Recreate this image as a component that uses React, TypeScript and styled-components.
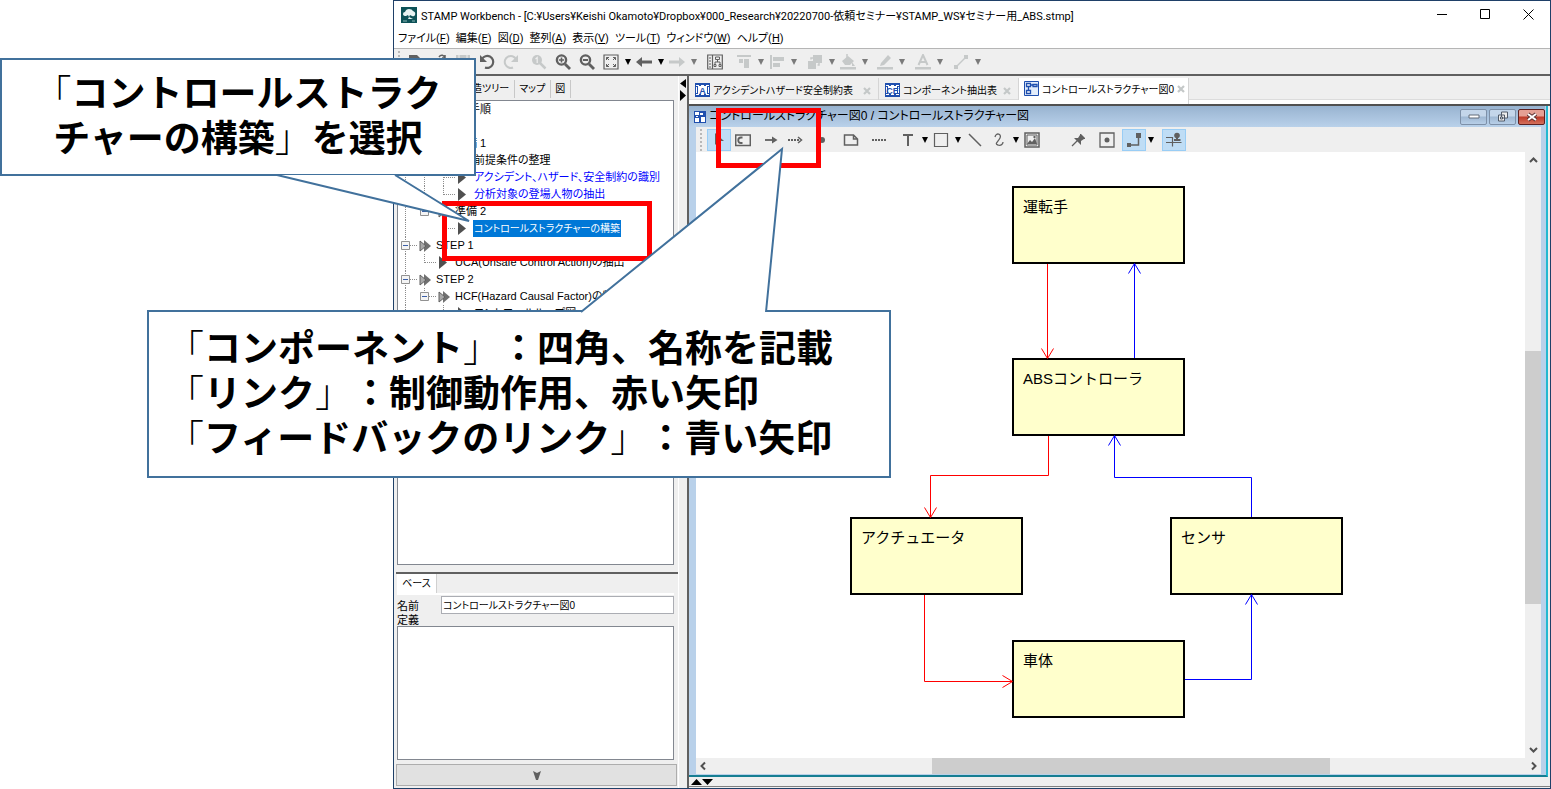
import React from "react";
import styled, { createGlobalStyle, css } from "styled-components";

const ui = `"Liberation Sans", "Noto Sans CJK JP", sans-serif`;

const GlobalStyle = createGlobalStyle`
  * { box-sizing: border-box; }
  body { margin: 0; background: #fff; color: #000; font-family: ${ui}; font-size: 11px; }
  button, input, textarea { font: inherit; color: inherit; }
  button { margin: 0; padding: 0; border: 0; background: none; }
  svg { display: block; flex: none; }
`;

/* ---------- page and window ---------- */

const Page = styled.main`
  position: relative;
  display: flex;
  min-height: 100vh;
  padding-left: 393px;
  overflow: hidden;
`;

const Window = styled.section`
  display: flex;
  flex: 1;
  flex-direction: column;
  min-width: 0;
  border: 1px solid #1f4068;
  background: #fff;
`;

const TitleBar = styled.header`
  display: flex;
  align-items: center;
  height: 27px;
  padding-left: 7px;
`;

const WindowTitle = styled.h1`
  flex: 1;
  margin: 0 0 0 4px;
  font: 400 11px Roboto, "Noto Sans CJK JP", sans-serif;
  font-feature-settings: "palt";
  white-space: nowrap;
`;

const CaptionButton = styled.button`
  display: flex;
  align-items: center;
  justify-content: center;
  width: 43px;
  height: 28px;
`;

const MenuBar = styled.nav`
  display: flex;
  align-items: flex-end;
  gap: 6px;
  height: 20px;
  padding-left: 4px;
`;

const MenuItem = styled.button`
  height: 18px;
  font-family: Roboto, "Noto Sans CJK JP", sans-serif;
  font-size: 11px;
  font-feature-settings: "palt";
  line-height: 18px;
  white-space: nowrap;
`;

/* ---------- toolbars ---------- */

const Toolbar = styled.div<{ $tall?: boolean }>`
  display: flex;
  flex: none;
  align-items: center;
  height: ${(p) => (p.$tall ? 28 : 25)}px;
  background: #efefef;
  ${(p) => p.$tall && css`border-top: 1px solid #b5b5b5; border-bottom: 2px solid #606060;`}
`;

const Grip = styled.span<{ $w: number }>`
  flex: none;
  width: ${(p) => p.$w}px;
  height: 22px;
  background: repeating-linear-gradient(#b8b8b8 0 2px, transparent 2px 4px) 4px 0 / 2px 100% no-repeat;
`;

const Tool = styled.button<{ $on?: boolean; $off?: boolean; $gap?: number }>`
  display: flex;
  flex: none;
  align-items: center;
  justify-content: center;
  width: 24px;
  height: 22px;
  margin-left: ${(p) => p.$gap ?? 0}px;
  color: ${(p) => (p.$off ? "#c6c9c9" : "#606060")};
  ${(p) => p.$on && css`background: #bfddf5; border: 1px solid #99cdf5;`}
`;

const CaretButton = styled.button<{ $off?: boolean }>`
  display: flex;
  flex: none;
  align-items: center;
  justify-content: center;
  width: 9px;
  height: 22px;
  color: ${(p) => (p.$off ? "#7a7a7a" : "#000")};
`;

/* ---------- panes ---------- */

const Body = styled.div`
  display: flex;
  flex: 1;
  min-height: 0;
  background: #efefef;
`;

const SidePane = styled.aside`
  display: flex;
  flex: none;
  flex-direction: column;
  width: 285px;
  padding-left: 2px;
  border-right: 1px solid #fff;
`;

const Splitter = styled.div`
  display: flex;
  flex: none;
  flex-direction: column;
  align-items: center;
  gap: 2px;
  width: 8px;
  padding-top: 3px;
`;

const SideTabs = styled.div`
  display: flex;
  flex: none;
  align-items: stretch;
  height: 24px;
  padding: 4px 0 2px 62px;
`;

const SideTab = styled.button`
  padding: 0 5px 0 4px;
  border-right: 1px solid #c8c8c8;
  font-size: 10px;
  font-feature-settings: "palt";
  line-height: 18px;
  white-space: nowrap;
`;

const Tree = styled.ul`
  flex: 1;
  margin: 0 4px 7px 1px;
  padding: 0;
  border: 1px solid #828790;
  background: #fff;
  list-style: none;
`;

const TreeRow = styled.li<{ $indent?: number }>`
  display: flex;
  height: 17px;
  align-items: center;
  padding-left: ${(p) => p.$indent ?? 0}px;
  white-space: nowrap;
`;

const Guide = styled.span<{ $line?: boolean; $last?: boolean; $own?: boolean }>`
  display: flex;
  flex: none;
  align-items: center;
  width: 19px;
  height: 17px;
  padding-left: 3px;
  background-repeat: no-repeat;
  background-image: ${(p) => (p.$line ? "repeating-linear-gradient(#8c8c8c 0 1px, transparent 1px 2px)" : "none")},
    ${(p) => (p.$own ? "repeating-linear-gradient(90deg, #8c8c8c 0 1px, transparent 1px 2px)" : "none")};
  background-position: 7px 0, 8px 8px;
  background-size: 1px ${(p) => (p.$last ? "9px" : "17px")}, 11px 1px;
`;

const NodeIcon = styled.span`
  display: flex;
  flex: none;
  width: 16px;
  margin-left: 2px;
`;

const NodeLabel = styled.span<{ $tone?: "link" | "selected" }>`
  height: 17px;
  padding: 0 1px;
  font-feature-settings: "palt";
  font-size: ${(p) => (p.$tone === "selected" ? 10 : 11)}px;
  line-height: 17px;
  color: ${(p) => (p.$tone === "link" ? "#0000ff" : p.$tone === "selected" ? "#fff" : "#000")};
  background: ${(p) => (p.$tone === "selected" ? "#0078d7" : "transparent")};
`;

const Properties = styled.form`
  display: flex;
  flex: none;
  flex-direction: column;
  height: 191px;
  padding: 0 4px 0 1px;
  border-top: 2px solid #606060;
`;

const PropertyTab = styled.button`
  align-self: flex-start;
  width: 40px;
  height: 19px;
  border-right: 1px solid #d0d0d0;
  background: #fff;
  font-size: 10px;
  font-feature-settings: "palt";
  line-height: 18px;
`;

const Field = styled.div`
  display: flex;
  align-items: center;
  height: 21px;
  border-top: 2px solid #fff;
  label { flex: none; width: 44px; }
  input {
    flex: 1;
    min-width: 0;
    height: 18px;
    padding: 0 1px;
    border: 1px solid #abadb3;
    background: #fff;
    font-size: 10px;
    font-feature-settings: "palt";
  }
`;

const DefinitionLabel = styled.label`
  height: 12px;
  line-height: 12px;
`;

const Definition = styled.textarea`
  flex: 1;
  border: 1px solid #828790;
  background: #fff;
  resize: none;
  margin-bottom: 3px;
`;

const CollapseButton = styled.button`
  display: flex;
  flex: none;
  align-items: center;
  justify-content: center;
  height: 22px;
  margin: 1px 1px 2px 0;
  border: 1px solid #adadad;
  background: #e1e1e1;
  color: #606060;
`;

/* ---------- documents ---------- */

const Documents = styled.section`
  display: flex;
  flex: 1;
  flex-direction: column;
  min-width: 0;
  border-left: 2px solid #606060;
`;

const DocTabs = styled.div`
  display: flex;
  flex: none;
  align-items: flex-end;
  height: 30px;
  border-bottom: 2px solid #505050;
  background: linear-gradient(#efefef 0 23px, #dcdcdc 23px 24px, #fff 24px);
`;

const DocTab = styled.button<{ $w: number; $active?: boolean }>`
  display: flex;
  flex: none;
  align-items: center;
  gap: 3px;
  width: ${(p) => p.$w}px;
  height: ${(p) => (p.$active ? 26 : 22)}px;
  margin-bottom: ${(p) => (p.$active ? 0 : 4)}px;
  padding: ${(p) => (p.$active ? "0 0 6px 5px" : "1px 0 0 6px")};
  border-right: 1px solid #d5d5d5;
  background: ${(p) => (p.$active ? "#fff" : "transparent")};
  font-size: 10px;
  font-feature-settings: "palt";
  white-space: nowrap;
`;

const TabClose = styled.span`
  flex: none;
  margin: 2px 7px 0 auto;
`;

const Frame = styled.div`
  display: flex;
  flex: 1;
  flex-direction: column;
  min-height: 0;
  padding: 0 5px 1px 7px;
  border-right: 2px solid #24b8d0;
  border-bottom: 2px solid #167e92;
  margin-right: 2px;
  background: #b9d1ea;
`;

const FrameTitle = styled.div`
  display: flex;
  flex: none;
  align-items: center;
  height: 21px;
  margin: 0 -4px 0 -7px;
  padding-left: 5px;
  background: linear-gradient(#98b3d0, #b9d1ea);
`;

const FrameName = styled.h2`
  flex: 1;
  margin: 0 0 0 3px;
  font-size: 12px;
  font-weight: 400;
  font-feature-settings: "palt";
  line-height: 21px;
  white-space: nowrap;
`;

const FrameButton = styled.button<{ $close?: boolean }>`
  display: flex;
  align-items: center;
  justify-content: center;
  width: 27px;
  height: 16px;
  margin-left: 2px;
  border: 1px solid ${(p) => (p.$close ? "#5c2020" : "#7d90a8")};
  border-radius: 2px;
  background: ${(p) =>
    p.$close
      ? "linear-gradient(#e4a094 0 6px, #bd3a28 7px, #d4705c)"
      : "linear-gradient(#c4d6ea 0 6px, #9fb8d3 7px, #b8cfe8)"};
`;

const Viewport = styled.div`
  display: grid;
  flex: 1;
  grid-template-columns: 1fr 16px;
  grid-template-rows: 1fr 16px;
  min-height: 0;
  background: #efefef;
`;

const Canvas = styled.div`
  position: relative;
  overflow: hidden;
  background: #fff;
`;

const Edges = styled.svg`
  position: absolute;
  inset: 0;
  width: 100%;
  height: 100%;
`;

const Component = styled.div<{ $x: number; $y: number }>`
  position: absolute;
  left: ${(p) => p.$x}px;
  top: ${(p) => p.$y}px;
  width: 173px;
  height: 78px;
  padding: 9px;
  border: 2px solid #000;
  background: #ffffcc;
  font-size: 15px;
  line-height: 20px;
`;

const VScroll = styled.div`
  display: flex;
  flex-direction: column;
  align-items: center;
  color: #505050;
  i { flex: 252; width: 100%; background: #cdcdcd; order: 2; }
  &::before { content: ""; flex: 183; order: 1; }
  &::after { content: ""; flex: 138; order: 3; }
  svg:first-of-type { order: 0; }
  svg:last-of-type { order: 4; }
`;

const HScroll = styled.div`
  display: flex;
  grid-column: 1 / 3;
  align-items: center;
  color: #505050;
  i { flex: 398; height: 100%; background: #cdcdcd; order: 2; }
  &::before { content: ""; flex: 221; order: 1; }
  &::after { content: ""; flex: 196; order: 3; }
  svg:first-of-type { order: 0; }
  svg:last-of-type { order: 4; }
`;

const BottomStrip = styled.div`
  flex: none;
  height: 10px;
  margin-bottom: 1px;
  padding: 2px 0 0 2px;
  border-bottom: 1px solid #808080;
`;

/* ---------- annotations ---------- */

const Highlight = styled.div<{ $x: number; $y: number; $w: number }>`
  position: absolute;
  left: ${(p) => p.$x}px;
  top: ${(p) => p.$y}px;
  width: ${(p) => p.$w}px;
  height: 60px;
  border: 5px solid #ff0000;
`;

const Callout = styled.div<{ $x: number; $y: number; $w: number; $h: number; $center?: boolean }>`
  position: absolute;
  left: ${(p) => p.$x}px;
  top: ${(p) => p.$y}px;
  width: ${(p) => p.$w}px;
  height: ${(p) => p.$h}px;
  padding: ${(p) => (p.$center ? "12px 0" : "15px 18px")};
  border: 2px solid #41719c;
  background: #fff;
  font: 700 37px/45px ${ui};
  text-align: ${(p) => (p.$center ? "center" : "left")};
  text-spacing-trim: space-all;
  white-space: nowrap;
  p { margin: 0; }
  span { font-weight: 300; }
`;

const Tail = styled.svg`
  position: absolute;
  left: 0;
  top: 0;
  overflow: visible;
  pointer-events: none;
`;

/* ---------- icons ---------- */

const Icon = ({ children, size = 16 }: { children: React.ReactNode; size?: number }) => (
  <svg width={size} height={size} viewBox="0 0 16 16" fill="none" stroke="currentColor" strokeWidth="1.5">
    {children}
  </svg>
);

const solid = { fill: "currentColor", stroke: "none" };

const Caret = ({ off }: { off?: boolean }) => (
  <CaretButton $off={off} aria-label="More">
    <svg width="6" height="6" viewBox="0 0 6 6"><path d="M0 0h6L3 6z" fill="currentColor" /></svg>
  </CaretButton>
);

const icons: Record<string, React.ReactNode> = {
  new: <path d="M2 1h8l4 4v10H2z" {...solid} />,
  open: <><path d="M0 5h5l2 2h7v8H0z" {...solid} /><path d="M8 3c2-3 5-2 6 1M11 4h3V1" /></>,
  save: <><path d="M1 1h14v14H1z" {...solid} /><path d="M4 1v5h8V1M4 15v-5h8v5" stroke="#efefef" strokeWidth="1" /></>,
  undo: <><path d="M3 5A6 6 0 1 1 6 13.5" strokeWidth="2.2" /><path d="M1 1v7h7z" {...solid} /></>,
  redo: <><path d="M13 5A6 6 0 1 0 10 13.5" strokeWidth="2" /><path d="M15 1v7H8z" {...solid} /></>,
  zoom1: <><circle cx="6" cy="6" r="5" {...solid} /><path d="M9 9l5.5 5.5" strokeWidth="2.5" /><path d="M4.5 5L6.2 3.5V9" stroke="#efefef" strokeWidth="1.2" /></>,
  zoomIn: <><circle cx="6.5" cy="6" r="4.6" strokeWidth="2.4" /><path d="M10 10l5 5" strokeWidth="2.8" /><path d="M4 6h5M6.5 3.5v5" strokeWidth="1.6" /></>,
  zoomOut: <><circle cx="6.5" cy="6" r="4.6" strokeWidth="2.4" /><path d="M10 10l5 5" strokeWidth="2.8" /><path d="M4 6h5" strokeWidth="2" /></>,
  fit: <><path d="M1 1h14v14H1z" strokeWidth="1.2" /><path d="M3.5 6V3.5H6M10 3.5h2.5V6M12.5 10v2.5H10M6 12.5H3.5V10M3.5 3.5L6 6M12.5 3.5L10 6M12.5 12.5L10 10M3.5 12.5L6 10" strokeWidth="1" /></>,
  back: <><path d="M0 8l6-5v10z" {...solid} /><path d="M5 8h11" strokeWidth="3" /></>,
  forward: <><path d="M16 8l-6-5v10z" {...solid} /><path d="M0 8h11" strokeWidth="3" /></>,
  structure: <><path d="M.7 1h14.6v14H.7zM5.5 1v14M2 4h2M2 7h2M2 10h2M2 13h2" strokeWidth="1.2" /><path d="M8.5 3h4v2.5h-4zM7 10.5h2v2H7zM12 10.500h2v2h-2zM10.5 5.5V8M8 10V8h5v2" strokeWidth="1" /></>,
  alignTop: <path d="M1 1h14v2H1zM3 5h4v4H3zM8 5h5v9H8z" {...solid} />,
  alignLeft: <path d="M1 1h2v14H1zM4 3h11v4H4zM4 9h7v4H4z" {...solid} />,
  layers: <><path d="M6 1h9v8H6zM1 7h8v8H1z" {...solid} /><path d="M4 5.5V4h8v7h-1.5" /></>,
  bucket: <><path d="M2 7l6-5 6 5-4 4H5zM12 8l3 4h-3zM0 13h16v2.5H0z" {...solid} /><path d="M7 5V0" /></>,
  pen: <path d="M4 9l7-8 3 3-7 7-4 1zM0 13h16v2.5H0z" {...solid} />,
  font: <><path d="M3.5 11L8 1l4.5 10M5 8h6" strokeWidth="2" /><path d="M0 13h16v2.5H0z" {...solid} /></>,
  line: <><path d="M3 13L13 3" /><path d="M1 11h4v4H1zM11 1h4v4h-4z" {...solid} /></>,
  select: <path d="M4 1l9 8H8l-4 4z" {...solid} />,
  component: <><path d="M.7 3h14.6v10.5H.7z" /><path d="M7.5 5.5H6a2.5 2.5 0 0 0 0 5.5h1.5" strokeWidth="1.8" /></>,
  link: <><path d="M2 8h9" strokeWidth="1.8" /><path d="M9 4.5L14.5 8 9 11.5z" {...solid} /></>,
  feedback: <><path d="M1 8h12" strokeDasharray="2 1" strokeWidth="1.8" /><path d="M11 5l3.5 3-3.5 3" /></>,
  dot: <circle cx="8" cy="8" r="3" {...solid} />,
  note: <path d="M1.5 3h9l4 4v6h-13zM10.5 3v4h4" />,
  dashes: <path d="M1 8h14" strokeDasharray="2 1" strokeWidth="1.8" />,
  text: <path d="M3 3h10M8 3v11" strokeWidth="2" />,
  rect: <path d="M1.5 1.5h13v13h-13z" strokeWidth="1.2" />,
  stroke: <path d="M2 2l12 12" />,
  curve: <path d="M4 5c1-5 7-3 5 1S3 12 7 13c3 1 5-1 5-3" strokeWidth="1.3" />,
  image: <><path d="M1 1h14v14H1z" /><path d="M3 3h10v10H3z" strokeWidth="1" /><path d="M3 12l3-4 2 2 3-4 2 6zM9.5 4h2v2h-2z" {...solid} /></>,
  pin: <><path d="M2 14l6-6" strokeWidth="1.2" /><path d="M4 6h4l2-3V2h1l4 4v1h-1l-3 2v4z" {...solid} /></>,
  target: <><path d="M1 1h14v14H1z" strokeWidth="1.3" /><circle cx="8" cy="8" r="2.5" {...solid} /></>,
  elbow: <><path d="M3 13h9.5V3" /><path d="M1 11h4v4H1zM10 1h5v5h-5z" {...solid} /></>,
  merge: <><path d="M0 5.5h6.500v9M0 10.500h15.500" strokeWidth="1.2" /><circle cx="11" cy="3.5" r="2.8" {...solid} /><path d="M11 4v4M8 8h6.500" strokeWidth="2" /></>,
};

type ToolSpec = { name: string; gap?: number; on?: boolean; off?: boolean; caret?: boolean };

const mainTools: ToolSpec[] = [
  { name: "new" }, { name: "open" }, { name: "save", off: true }, { name: "undo" }, { name: "redo", off: true },
  { name: "zoom1", gap: 4, off: true }, { name: "zoomIn" }, { name: "zoomOut" }, { name: "fit", caret: true },
  { name: "back", caret: true }, { name: "forward", off: true, caret: true }, { name: "structure", gap: 5 },
  { name: "alignTop", gap: 5, off: true, caret: true }, { name: "alignLeft", off: true, caret: true },
  { name: "layers", gap: 5, off: true, caret: true }, { name: "bucket", off: true, caret: true },
  { name: "pen", gap: 4, off: true, caret: true }, { name: "font", gap: 5, off: true, caret: true },
  { name: "line", gap: 5, off: true, caret: true },
];

const diagramTools: ToolSpec[] = [
  { name: "select", on: true }, { name: "component" }, { name: "link", gap: 4 }, { name: "feedback" },
  { name: "dot", gap: 3 }, { name: "note", gap: 5 }, { name: "dashes", gap: 4 }, { name: "text", gap: 5, caret: true },
  { name: "rect", caret: true }, { name: "stroke", gap: 1 }, { name: "curve", caret: true }, { name: "image" },
  { name: "pin", gap: 22 }, { name: "target", gap: 5 }, { name: "elbow", gap: 3, on: true, caret: true },
  { name: "merge", gap: 7, on: true },
];

const Tools = ({ items }: { items: ToolSpec[] }) => (
  <>
    {items.map((t) => (
      <React.Fragment key={t.name}>
        <Tool $gap={t.gap} $on={t.on} $off={t.off} aria-label={t.name}>
          <Icon>{icons[t.name]}</Icon>
        </Tool>
        {t.caret && <Caret off={t.off} />}
      </React.Fragment>
    ))}
  </>
);

const Chevron = ({ d }: { d: string }) => (
  <svg width="15" height="16" viewBox="0 0 15 16" fill="none" stroke="currentColor" strokeWidth="2"><path d={d} /></svg>
);

const TableIcon = ({ text }: { text: string }) => (
  <svg width="15" height="14" viewBox="0 0 15 14">
    <path d="M0 0h15v14H0z" fill="#1f4fae" />
    <path d="M1 2.5h13M1 11.5h13" stroke="#fff" strokeDasharray="3 2" />
    <path d="M1 4h1v6H1zM3 3h9v8H3zM13 4h1v6h-1z" fill="#fff" />
    <text x="7.5" y="10.5" textAnchor="middle" fontSize="9" fontWeight="700" fill="#1f4fae">{text}</text>
  </svg>
);

const DiagramIcon = () => (
  <svg width="15" height="15" viewBox="0 0 15 15" fill="none" stroke="#1f4fae">
    <path d="M.5.5h14v14H.5z" fill="#e3edfb" />
    <path d="M2.5 2.5h4v3h-4zM2.5 9.5h4v3h-4zM4.5 5.5v4M6.5 4H9M9 3.5h4v2H9z" fill="#fff" strokeWidth="1.3" />
  </svg>
);

const FrameIcon = () => (
  <svg width="12" height="12" viewBox="0 0 12 12">
    <path d="M0 0h12v12H0z" fill="#1f4fae" />
    <path d="M1 1h4v3H1zM1 7h4v4H1zM6 2h3v2H6zM7 6h4v5H7zM2 5h2v1H2z" fill="#fff" />
  </svg>
);

const AppIcon = () => (
  <svg width="16" height="16" viewBox="0 0 16 16">
    <path d="M0 0h16v16H0z" fill="#0d5257" />
    <path d="M2 7q0-2 2-2 1-3 4-3 3 0 4 2 3 1 2 4-1 2-3 1L9 8l-1 2 2 1 2 1H7l1-2-1-2-2 1q-3 0-3-2z" fill="#e8f3f2" />
    <path d="M2 14h4M11 14h3" stroke="#8fb8b8" />
  </svg>
);

const CloseGlyph = () => (
  <TabClose>
    <svg width="8" height="8" viewBox="0 0 8 8"><path d="M1 1l6 6M7 1L1 7" stroke="#c4c8c8" strokeWidth="2.2" /></svg>
  </TabClose>
);

const Expander = () => (
  <svg width="9" height="9" viewBox="0 0 9 9">
    <path d="M.5.5h8v8h-8z" fill="#f4f4f4" stroke="#919191" />
    <path d="M2 4.5h5" stroke="#3b5fa8" />
  </svg>
);

const Leaf = () => <svg width="10" height="13" viewBox="0 0 10 13"><path d="M1 0l8 6.5L1 13z" fill="#505050" /></svg>;
const Branch = () => (
  <svg width="13" height="12" viewBox="0 0 13 12">
    <path d="M5 0l7 6-7 6z" fill="#707070" />
    <path d="M1 1l6 5-6 5z" fill="#a8a8a8" stroke="#606060" />
  </svg>
);

/* ---------- data ---------- */

type Row = { label: string; level: number; branch?: boolean; last?: boolean; tone?: "link" | "selected"; lines?: boolean[] };

const rows: Row[] = [
  { label: "準備 1", level: 1, branch: true },
  { label: "前提条件の整理", level: 2, lines: [true, true] },
  { label: "アクシデント、ハザード、安全制約の識別", level: 2, lines: [true, true], tone: "link" },
  { label: "分析対象の登場人物の抽出", level: 2, lines: [true, true], tone: "link", last: true },
  { label: "準備 2", level: 1, branch: true, last: true, lines: [true] },
  { label: "コントロールストラクチャーの構築", level: 2, lines: [true, false], tone: "selected", last: true },
  { label: "STEP 1", level: 0, branch: true },
  { label: "UCA(Unsafe Control Action)の抽出", level: 1, lines: [true], last: true },
  { label: "STEP 2", level: 0, branch: true },
  { label: "HCF(Hazard Causal Factor)の特定", level: 1, branch: true, lines: [true], last: true },
  { label: "コントロールループ図", level: 2, lines: [true, false] },
];

const menus = [
  ["ファイル", "F"], ["編集", "E"], ["図", "D"], ["整列", "A"],
  ["表示", "V"], ["ツール", "T"], ["ウィンドウ", "W"], ["ヘルプ", "H"],
];

const nodes = [
  { label: "運転手", x: 316, y: 34 },
  { label: "ABSコントローラ", x: 316, y: 206 },
  { label: "アクチュエータ", x: 154, y: 365 },
  { label: "センサ", x: 474, y: 365 },
  { label: "車体", x: 316, y: 488 },
];

const redEdges = [
  "M351.5 112V206M345.5 196.5l6 10 6-10",
  "M352.5 284V323.5H234.5V365M228.5 355.5l6 10 6-10",
  "M228.5 443V529.5H316M306.5 523.5l10 6-10 6",
];
const blueEdges = [
  "M438.5 206V112M432.5 121.5l6-10 6 10",
  "M555.5 365V325.5H418.5V284M412.5 293.5l6-10 6 10",
  "M489 527.5H555.5V443M549.5 452.5l6-10 6 10",
];

/* ---------- app ---------- */

const ProcedureTree = () => (
  <Tree>
    <TreeRow $indent={70}><NodeLabel>手順</NodeLabel></TreeRow>
    <TreeRow />
    {rows.map((r) => (
      <TreeRow key={r.label}>
        {Array.from({ length: r.level }, (_, i) => <Guide key={i} $line={r.lines ? r.lines[i] : true} />)}
        <Guide $line $own $last={r.last}>{r.branch && <Expander />}</Guide>
        <NodeIcon>{r.branch ? <Branch /> : <Leaf />}</NodeIcon>
        <NodeLabel $tone={r.tone}>{r.label}</NodeLabel>
      </TreeRow>
    ))}
  </Tree>
);

export default function App() {
  return (
    <Page>
      <GlobalStyle />
      <Window>
        <TitleBar>
          <AppIcon />
          <WindowTitle>STAMP Workbench - [C:¥Users¥Keishi Okamoto¥Dropbox¥000_Research¥20220700-依頼セミナー¥STAMP_WS¥セミナー用_ABS.stmp]</WindowTitle>
          <CaptionButton aria-label="Minimize"><svg width="11" height="11"><path d="M0 5.5h10" stroke="#000" /></svg></CaptionButton>
          <CaptionButton aria-label="Maximize"><svg width="11" height="11"><path d="M.5.5h9v9h-9z" stroke="#000" fill="none" /></svg></CaptionButton>
          <CaptionButton aria-label="Close"><svg width="11" height="11"><path d="M.5.5l10 10M10.5.5l-10 10" stroke="#000" /></svg></CaptionButton>
        </TitleBar>
        <MenuBar>
          {menus.map(([name, key]) => <MenuItem key={key}>{name}(<u>{key}</u>)</MenuItem>)}
        </MenuBar>
        <Toolbar $tall><Grip $w={9} /><Tools items={mainTools} /></Toolbar>

        <Body>
          <SidePane>
            <SideTabs>
              <SideTab>構造ツリー</SideTab>
              <SideTab>マップ</SideTab>
              <SideTab>図</SideTab>
            </SideTabs>
            <ProcedureTree />
            <Properties>
              <PropertyTab type="button">ベース</PropertyTab>
              <Field>
                <label htmlFor="name">名前</label>
                <input id="name" defaultValue="コントロールストラクチャー図0" />
              </Field>
              <DefinitionLabel htmlFor="definition">定義</DefinitionLabel>
              <Definition id="definition" />
            </Properties>
            <CollapseButton aria-label="Collapse"><svg width="8" height="9"><path d="M0 0l4 2 4-2-3 9H3z" fill="currentColor" /></svg></CollapseButton>
          </SidePane>
          <Splitter>
            <svg width="6" height="9"><path d="M6 0v9L0 4.5z" /></svg>
            <svg width="6" height="11"><path d="M0 0v11l6-5.5z" /></svg>
          </Splitter>
          <Documents>
            <DocTabs>
              <DocTab $w={190}><TableIcon text="A" />アクシデントハザード安全制約表<CloseGlyph /></DocTab>
              <DocTab $w={140}><TableIcon text="CE" />コンポーネント抽出表<CloseGlyph /></DocTab>
              <DocTab $w={170} $active><DiagramIcon />コントロールストラクチャー図0<CloseGlyph /></DocTab>
            </DocTabs>
            <Frame>
              <FrameTitle>
                <FrameIcon />
                <FrameName>コントロールストラクチャー図0 / コントロールストラクチャー図</FrameName>
                <FrameButton aria-label="Minimize"><svg width="12" height="5"><path d="M1 1h10v3H1z" fill="#fff" stroke="#606a78" /></svg></FrameButton>
                <FrameButton aria-label="Restore"><svg width="12" height="11" fill="#eee" stroke="#505a68"><path d="M4.5 1h6v6h-6zM1.5 4h6v6h-6z" /><path d="M3.5 6h2v2h-2z" /></svg></FrameButton>
                <FrameButton $close aria-label="Close"><svg width="12" height="10"><path d="M2 2l8 6M10 2L2 8" stroke="#5a3030" strokeWidth="4" /><path d="M2 2l8 6M10 2L2 8" stroke="#fff" strokeWidth="2" /></svg></FrameButton>
              </FrameTitle>
              <Toolbar><Grip $w={11} /><Tools items={diagramTools} /></Toolbar>
              <Viewport>
                <Canvas>
                  {nodes.map((n) => <Component key={n.label} $x={n.x} $y={n.y}>{n.label}</Component>)}
                  <Edges fill="none">
                    {redEdges.map((d) => <path key={d} d={d} stroke="#ff0000" />)}
                    {blueEdges.map((d) => <path key={d} d={d} stroke="#0000ff" />)}
                  </Edges>
                </Canvas>
                <VScroll><Chevron d="M4 10l3.5-3.5L11 10" /><i /><Chevron d="M4 6l3.5 3.5L11 6" /></VScroll>
                <HScroll><Chevron d="M9 4.5L5.5 8 9 11.5" /><i /><Chevron d="M6 4.5L9.5 8 6 11.5" /></HScroll>
              </Viewport>
            </Frame>
            <BottomStrip><svg width="22" height="6"><path d="M0 6h11L5.5 0zM11 0h11l-5.5 6z" /></svg></BottomStrip>
          </Documents>
        </Body>
      </Window>

      <Highlight $x={442} $y={201} $w={210} />
      <Highlight $x={716} $y={108} $w={105} />

      <Callout $x={0} $y={58} $w={476} $h={118} $center>
        <p><span>「</span>コントロールストラク</p>
        <p>チャーの構築<span>」</span>を選択</p>
        <Tail width="1" height="1">
          <path d="M275 115L467 161 393 115" fill="#fff" stroke="#41719c" strokeWidth="2" />
        </Tail>
      </Callout>
      <Callout $x={147} $y={310} $w={744} $h={168}>
        <p><span>「</span>コンポーネント<span>」</span>：四角、名称を記載</p>
        <p><span>「</span>リンク<span>」</span>：制御動作用、赤い矢印</p>
        <p><span>「</span>フィードバックのリンク<span>」</span>：青い矢印</p>
        <Tail width="1" height="1">
          <path d="M432 0L633 -163 617 0" fill="#fff" stroke="#41719c" strokeWidth="2" />
        </Tail>
      </Callout>
    </Page>
  );
}
